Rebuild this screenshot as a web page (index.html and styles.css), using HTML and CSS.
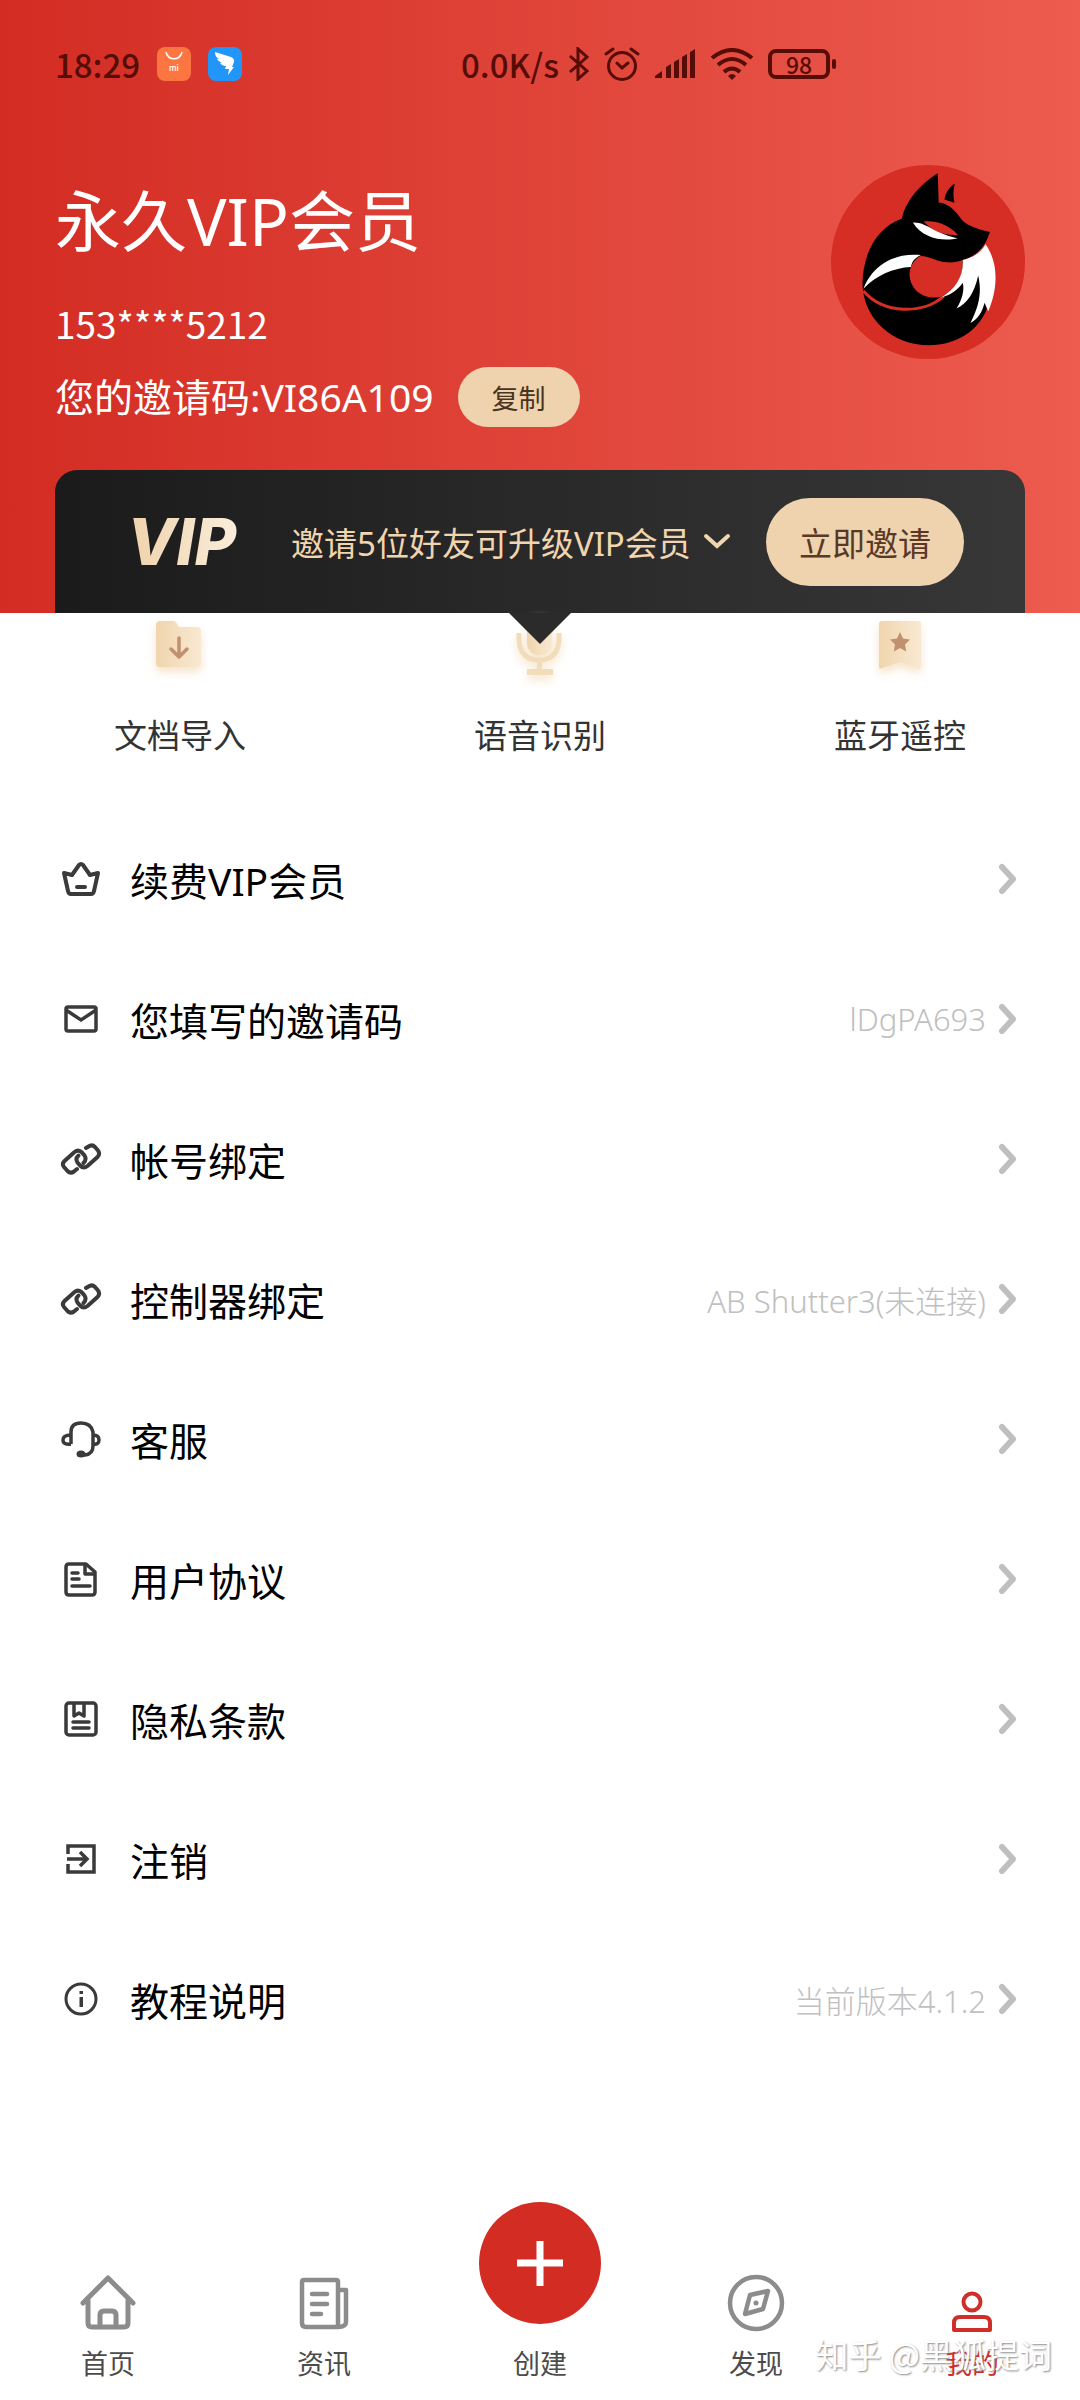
FILE: index.html
```html
<!DOCTYPE html>
<html lang="zh-CN">
<head>
  <meta charset="UTF-8">
  <meta name="viewport" content="width=device-width, initial-scale=1.0">
  <title>我的</title>
  <link rel="stylesheet" href="styles.css">
</head>
<body>
  <!-- shared icons -->
  <svg class="sprite" aria-hidden="true">
    <symbol id="arrow" viewBox="0 0 20 32">
      <path d="M4 4l11 12L4 28" fill="none" stroke="#bfbfbf" stroke-width="6" stroke-linecap="round" stroke-linejoin="round"/>
    </symbol>
    <symbol id="link" viewBox="0 0 42 42">
      <g fill="none" stroke="#3a3a3a" stroke-width="4" stroke-linecap="round">
        <path d="M17 31l-3 2.500q-3.500 2.500-6.500-.5l-3.500-4q-2.500-3 .5-6l10-9q4-3 7.500.5l2.500 3q2.500 4-1 7.500"/>
        <path d="M26 10l2.500-1.500q3.500-2.500 6.500.5l3 3.500q2.500 3.500-.5 6.500l-10 9q-4 3-7.500-.5l-2.500-3q-2.500-4 1-7"/>
      </g>
    </symbol>
  </svg>

  <header class="header">
    <div class="status-bar">
      <div class="status-left">
        <span>18:29</span>
        <svg width="34" height="34" viewBox="0 0 34 34">
          <rect width="34" height="34" rx="8" fill="#fd7541"/>
          <path d="M9 5c2 9 14 9 16 0" fill="none" stroke="#fff" stroke-width="1.500"/>
          <text x="17" y="24" text-anchor="middle" font-size="8" fill="#fff">mi</text>
        </svg>
        <svg width="34" height="34" viewBox="0 0 34 34">
          <rect width="34" height="34" rx="8" fill="#2196f8"/>
          <path d="M7 5l16 5q4 2 3 5l-2 5h2l-6 8 1-6h-4l1-3q-4 0-6-3l2-.5q-4-1-5-4l3 .3Q7 11 7 5z" fill="#fff"/>
        </svg>
      </div>
      <div class="status-right">
        <span>0.0K/s</span>
        <svg class="bluetooth" width="22" height="34" viewBox="0 0 22 34">
          <path d="M2 9l17 15-9 8V2l9 8L2 25" fill="none" stroke="#560c07" stroke-width="3"/>
        </svg>
        <svg class="alarm" width="36" height="34" viewBox="0 0 36 34">
          <g fill="none" stroke="#560c07" stroke-width="3" stroke-linecap="round">
            <circle cx="18" cy="19" r="13.500"/><path d="M13 16l5 5 6-5M2 7l7-5M34 7l-7-5"/>
          </g>
        </svg>
        <svg class="signal" width="42" height="30" viewBox="0 0 42 30">
          <path d="M1 29v-2l7-5v7zM12 29V18l5-3v14zM20 29V13l5-3v19zM28 29V8l5-3v24zM36 29V3l5-3v29z" fill="#560c07"/>
        </svg>
        <svg class="wifi" width="44" height="32" viewBox="0 0 44 32">
          <g fill="none" stroke="#560c07" stroke-width="4">
            <path d="M2 10q20-16 40 0M8 17q14-12 28 0M14 24q8-7 16 0"/>
          </g>
          <path d="M18 28q4-4 8 0l-4 4z" fill="#560c07"/>
        </svg>
        <span class="battery">98</span>
      </div>
    </div>

    <div class="profile">
      <div class="profile-info">
        <h1>永久VIP会员</h1>
        <p>153****5212</p>
        <div class="invite-code">
          <span>您的邀请码:VI86A109</span>
          <button type="button" class="copy-btn">复制</button>
        </div>
      </div>
      <svg class="avatar" viewBox="93 78 580 580" role="img" aria-label="头像">
        <circle cx="383" cy="368" r="290" fill="#d62d24"/>
        <path d="M412 103C355 138 315 190 305 238C230 265 190 340 187 430C188 540 280 617 385 617C470 617 535 570 558 510L575 440L540 390L487 362C530 350 555 320 568 278C535 270 505 262 485 243C465 215 445 192 415 190z" fill="#000"/>
        <path d="M463 133C445 145 435 162 432 181L462 191C458 170 458 155 463 133z" fill="#000"/>
        <path d="M360 350C390 350 410 368 440 369C460 370 475 366 487 362C488 400 478 430 450 458C430 472 415 476 395 474C350 470 326 435 328 400C330 380 342 360 360 350z" fill="#d62d24"/>
        <path d="M190 448C220 370 290 340 362 347C345 355 335 365 332 383C280 385 225 410 190 448z" fill="#fff"/>
        <path d="M190 455C250 525 370 525 430 470" fill="none" stroke="#d62d24" stroke-width="9"/>
        <path d="M487 362C520 355 545 335 555 315C595 370 592 450 563 515L552 490C545 520 530 540 510 550C535 500 545 460 533 408C522 460 500 492 468 507C486 480 492 450 487 430C470 455 445 468 423 474C465 450 490 410 487 362z" fill="#fff"/>
        <path d="M338 250C375 247 410 285 472 297C430 308 365 298 338 250z" fill="#fff"/>
        <path d="M370 247C415 243 450 262 472 287C430 290 395 275 370 247z" fill="#d62d24"/>
      </svg>
    </div>

    <section class="vip-banner">
      <strong class="vip-logo">VIP</strong>
      <button type="button" class="vip-text">邀请5位好友可升级VIP会员
        <svg width="28" height="18" viewBox="0 0 28 18"><path d="M3 3l11 10L25 3" fill="none" stroke="#f0d5b0" stroke-width="4" stroke-linecap="round"/></svg>
      </button>
      <button type="button" class="invite-btn">立即邀请</button>
    </section>
  </header>

  <main>
    <div class="tools">
      <a class="tool" href="#import">
        <svg width="60" height="60" viewBox="0 0 60 60">
          <defs><linearGradient id="gold"><stop offset="0" stop-color="#f0d5ae"/><stop offset="1" stop-color="#f9e9d2"/></linearGradient></defs>
          <path d="M6 12q0-4 4-4h13q3 0 4 3l2 3h18q4 0 4 4v32q0 4-4 4H10q-4 0-4-4z" fill="url(#gold)"/>
          <path d="M29 25v18M21 36l8 8 8-8" fill="none" stroke="#c09070" stroke-width="3.500" stroke-linecap="round" stroke-linejoin="round"/>
        </svg>
        文档导入
      </a>
      <a class="tool" href="#voice">
        <svg width="60" height="60" viewBox="0 0 60 60">
          <rect x="17" y="0" width="25" height="42" rx="12" fill="url(#gold)"/>
          <path d="M9 20v8q2 19 20 19t20-19v-8" fill="none" stroke="#f3dcb9" stroke-width="5"/>
          <path d="M27 47h5v10h-5zM17 56h26v6H17z" fill="#f3dcb9"/>
        </svg>
        语音识别
      </a>
      <a class="tool" href="#remote">
        <svg width="60" height="60" viewBox="0 0 60 60">
          <path d="M9 11q0-3 3-3h36q3 0 3 3v43q0 3-3 1L30 49 12 55q-3 2-3-1z" fill="url(#gold)"/>
          <path d="M30 19l3 6.500 7 1-5 5 1.200 7L30 35l-6.200 3.500 1.200-7-5-5 7-1z" fill="#c09070"/>
        </svg>
        蓝牙遥控
      </a>
    </div>

    <div class="menu">
      <a class="row" href="#renew">
        <svg class="row-icon" viewBox="0 0 42 42"><g fill="none" stroke="#3a3a3a" stroke-width="4" stroke-linejoin="round" stroke-linecap="round"><path d="M4 15l8 2 7-10q2-2 4 0l7 10 8-2-4 18q-.5 3-3 3H11q-2.500 0-3-3z"/><path d="M17 29h8"/></g></svg>
        <span class="label">续费VIP会员</span>
        <svg class="arrow"><use href="#arrow"/></svg>
      </a>
      <a class="row" href="#code">
        <svg class="row-icon" viewBox="0 0 42 42"><g fill="none" stroke="#3a3a3a" stroke-width="3.500"><rect x="6" y="9" width="30" height="24" rx="2"/><path d="M6 12l15 10 15-10"/></g></svg>
        <span class="label">您填写的邀请码</span>
        <span class="value">lDgPA693</span>
        <svg class="arrow"><use href="#arrow"/></svg>
      </a>
      <a class="row" href="#account">
        <svg class="row-icon"><use href="#link"/></svg>
        <span class="label">帐号绑定</span>
        <svg class="arrow"><use href="#arrow"/></svg>
      </a>
      <a class="row" href="#controller">
        <svg class="row-icon"><use href="#link"/></svg>
        <span class="label">控制器绑定</span>
        <span class="value">AB Shutter3(未连接)</span>
        <svg class="arrow"><use href="#arrow"/></svg>
      </a>
      <a class="row" href="#service">
        <svg class="row-icon" viewBox="0 0 42 42"><g fill="none" stroke="#3a3a3a" stroke-width="3.500"><path d="M11 26V14q0-9 10-9t12 9v14q0 8-8 9h-4"/><path d="M11 17q-8 0-8 5t8 4M33 17q6 0 6 5t-6 4"/></g><ellipse cx="21" cy="36" rx="4.500" ry="3.500" fill="#3a3a3a"/></svg>
        <span class="label">客服</span>
        <svg class="arrow"><use href="#arrow"/></svg>
      </a>
      <a class="row" href="#agreement">
        <svg class="row-icon" viewBox="0 0 42 42"><g fill="none" stroke="#3a3a3a" stroke-width="3.500" stroke-linejoin="round" stroke-linecap="round"><path d="M9 6h17l9 8v20q0 3-3 3H9q-3 0-3-3V9q0-3 3-3z"/><path d="M25 7v9h9M12 15h6M12 21h7M12 28h18"/></g></svg>
        <span class="label">用户协议</span>
        <svg class="arrow"><use href="#arrow"/></svg>
      </a>
      <a class="row" href="#privacy">
        <svg class="row-icon" viewBox="0 0 42 42"><g fill="none" stroke="#3a3a3a" stroke-width="3.500" stroke-linejoin="round" stroke-linecap="round"><rect x="6" y="5" width="30" height="32" rx="3"/><path d="M14 6v12l5-3 5 3V6M13 24h16M13 30h16"/></g></svg>
        <span class="label">隐私条款</span>
        <svg class="arrow"><use href="#arrow"/></svg>
      </a>
      <a class="row" href="#logout">
        <svg class="row-icon" viewBox="0 0 42 42"><g fill="none" stroke="#3a3a3a" stroke-width="3.500"><path d="M8 16V8h26v26H8v-8M7 21h19"/><path d="M20 14l7 7-7 7"/></g></svg>
        <span class="label">注销</span>
        <svg class="arrow"><use href="#arrow"/></svg>
      </a>
      <a class="row" href="#help">
        <svg class="row-icon" viewBox="0 0 42 42"><circle cx="21" cy="21" r="15" fill="none" stroke="#3a3a3a" stroke-width="3"/><path d="M19.500 19h3.500v10h-3.500zM19.500 13h3.500v3h-3.500z" fill="#3a3a3a"/></svg>
        <span class="label">教程说明</span>
        <span class="value">当前版本4.1.2</span>
        <svg class="arrow"><use href="#arrow"/></svg>
      </a>
    </div>
  </main>

  <nav class="tabbar">
    <a href="#home">
      <svg width="60" height="60" viewBox="0 0 60 60"><g fill="none" stroke="#8c8c8c" stroke-width="5" stroke-linecap="round" stroke-linejoin="round"><path d="M5 31L30 6l25 25"/><path d="M10 28v23q0 4 4 4h32q4 0 4-4V28"/><path d="M22 54V43q0-4 4-4h8q4 0 4 4v11"/></g></svg>
      首页
    </a>
    <a href="#news">
      <svg width="60" height="60" viewBox="0 0 60 60"><g fill="none" stroke="#8c8c8c" stroke-width="4.500" stroke-linecap="round" stroke-linejoin="round"><path d="M44 55H12q-4 0-4-4V10q0-2 2-2h32q2 0 2 2v45q8 0 8-5V18h-8"/><path d="M18 22h15M18 32h15M18 42h9"/></g></svg>
      资讯
    </a>
    <a href="#create">
      <span class="fab"><svg width="122" height="122" viewBox="0 0 122 122"><path d="M61 39v45M38 61h46" stroke="#fff" stroke-width="7"/></svg></span>
      创建
    </a>
    <a href="#discover">
      <svg width="60" height="60" viewBox="0 0 60 60"><g fill="none" stroke="#8c8c8c" stroke-width="4.500" stroke-linejoin="round"><circle cx="30" cy="31" r="26"/><path d="M24 23l18-4-5 18-18 5z"/></g><circle cx="30" cy="31" r="2.500" fill="#8c8c8c"/></svg>
      发现
    </a>
    <a href="#me" class="active">
      <svg width="60" height="60" viewBox="0 0 60 60"><g fill="none" stroke="#cf2f28" stroke-width="4"><circle cx="30" cy="30" r="8.500"/><path d="M12 58V51q0-6 6-6h24q6 0 6 6v7z" stroke-linejoin="round"/></g></svg>
      我的
    </a>
    <span class="watermark">知乎 @黑狐提词</span>
  </nav>
</body>
</html>
```

FILE: styles.css
```css
* {
  box-sizing: border-box;
}
body {
  display: flex;
  flex-direction: column;
  min-height: 100vh;
  margin: 0;
  background: #fff;
  color: #000;
  font-family: "Noto Sans", "Noto Sans CJK SC", sans-serif;
}
a {
  color: inherit;
  text-decoration: none;
}
button {
  border: 0;
  padding: 0;
  background: none;
  font-family: inherit;
  white-space: nowrap;
}
svg {
  display: block;
  flex-shrink: 0;
}
.sprite {
  position: absolute;
  width: 0;
  height: 0;
}

.header {
  padding: 40px 55px 0;
  background: linear-gradient(90deg, #d32c23, #ed5c4f);
}
.status-bar {
  display: grid;
  grid-template-columns: 406px 1fr;
  height: 48px;
  color: #560c07;
  font-family: "Noto Sans CJK SC", sans-serif;
  font-size: 33px;
  font-weight: 500;
  line-height: 48px;
}
.status-left,
.status-right {
  display: flex;
  align-items: center;
}
.status-left {
  gap: 17px;
}
.status-right {
  gap: 14px;
}
.status-right .bluetooth {
  margin-left: -5px;
}
.battery {
  position: relative;
  width: 62px;
  height: 30px;
  border: 4px solid #560c07;
  border-radius: 8px;
  font-size: 23px;
  line-height: 22px;
  text-align: center;
}
.battery::after {
  content: "";
  position: absolute;
  top: 6px;
  right: -10px;
  width: 4px;
  height: 10px;
  border-radius: 2px;
  background: #560c07;
}

.profile {
  display: flex;
  justify-content: space-between;
  align-items: flex-start;
  padding-top: 77px;
  color: #fff;
}
.profile h1 {
  margin: 10px 0 0;
  font-size: 66px;
  font-weight: 400;
  line-height: 90px;
}
.profile p {
  margin: 32px 0 0;
  font-family: "Noto Sans CJK SC", sans-serif;
  font-size: 37px;
  line-height: 52px;
}
.invite-code {
  display: flex;
  align-items: center;
  gap: 24px;
  margin-top: 18px;
  font-size: 39px;
  line-height: 60px;
}
.copy-btn {
  width: 122px;
  height: 60px;
  border-radius: 30px;
  background: #eed3ae;
  color: #4a3420;
  font-size: 27px;
}
.avatar {
  width: 194px;
  height: 194px;
}

.vip-banner {
  position: relative;
  display: flex;
  align-items: center;
  height: 143px;
  margin-top: 43px;
  padding: 0 61px 0 72px;
  border-radius: 22px 22px 0 0;
  background: linear-gradient(90deg, #1b1b1b, #373737);
}
.vip-banner::after {
  content: "";
  position: absolute;
  z-index: 1;
  top: 100%;
  left: 50%;
  margin-left: -31px;
  border: 31px solid transparent;
  border-top-color: #2b2b2b;
  border-bottom: 0;
}
.vip-logo {
  width: 120px;
  background: linear-gradient(90deg, #efd2ab, #fbf0df);
  background-clip: text;
  color: transparent;
  font-family: Inter, sans-serif;
  font-size: 64px;
  font-style: italic;
  font-weight: 800;
}
.vip-text {
  display: flex;
  align-items: center;
  gap: 12px;
  margin-left: 44px;
  color: #f0d5b0;
  font-size: 33px;
}
.invite-btn {
  width: 198px;
  height: 88px;
  margin-left: auto;
  border-radius: 44px;
  background: #eed3ae;
  color: #5a3826;
  font-size: 33px;
}

.tools {
  display: grid;
  grid-template-columns: repeat(3, 1fr);
  height: 196px;
}
.tool {
  display: flex;
  flex-direction: column;
  align-items: center;
  gap: 39px;
  color: #333;
  font-size: 33px;
  line-height: 48px;
}
.tool svg {
  overflow: visible;
  filter: drop-shadow(0 5px 4px #f6e4ca);
}

.row {
  display: flex;
  align-items: center;
  height: 140px;
  padding: 0 62px 0 60px;
}
.row-icon {
  width: 42px;
  height: 42px;
}
.label {
  margin-left: 28px;
  font-size: 39px;
}
.value {
  margin-left: auto;
  color: #c0c0c0;
  font-size: 31px;
  font-weight: 300;
}
.arrow {
  width: 20px;
  height: 32px;
  margin-left: auto;
}
.value + .arrow {
  margin-left: 12px;
}

.tabbar {
  position: relative;
  display: grid;
  grid-template-columns: repeat(5, 1fr);
  align-items: end;
  margin-top: auto;
  padding-bottom: 16px;
}
.tabbar a {
  display: flex;
  flex-direction: column;
  align-items: center;
  gap: 12px;
  color: #4c4c4c;
  font-size: 27px;
  line-height: 40px;
}
.tabbar .active {
  color: #cf2f28;
}
.fab {
  margin-bottom: 8px;
  border-radius: 50%;
  background: #d32c23;
}
.watermark {
  position: absolute;
  right: 28px;
  bottom: 22px;
  color: #fff;
  font-family: "Noto Sans CJK SC", sans-serif;
  font-size: 33px;
  line-height: 48px;
  text-shadow: 1px 1px 2px #888;
}
```
